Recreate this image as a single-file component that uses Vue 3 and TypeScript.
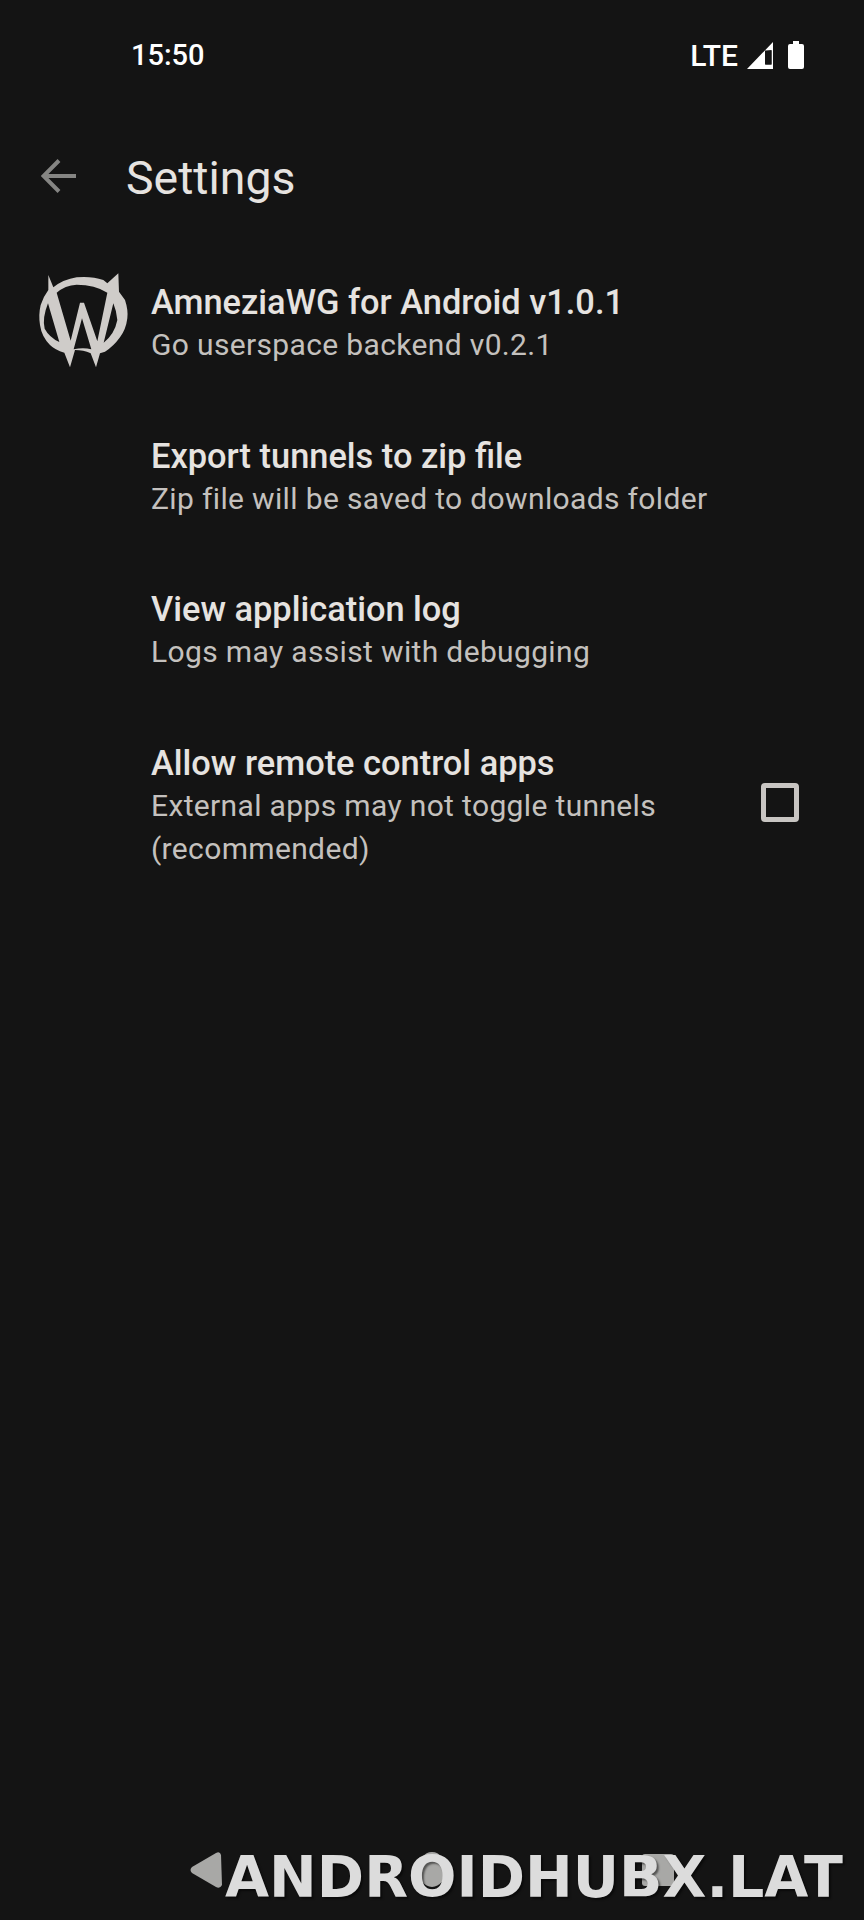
<template>
  <div class="screen">
    <header class="status-bar">
      <span class="clock">15:50</span>
      <div class="status-icons">
        <span class="lte">LTE</span>
        <svg class="signal" width="26" height="27" viewBox="0 0 26 27">
          <path fill-rule="evenodd" fill="#fff" d="M26 0V27H0ZM18 8.500 18 22.500 24.500 22.500 24.500 8.500 Z" />
          <path fill="#141414" d="M18.500 9 24.500 8V22.500H18.500Z" />
        </svg>
        <svg class="battery" width="16" height="28" viewBox="0 0 16 28">
          <path fill="#fff" d="M5 0H11V3H14Q16 3 16 5V26Q16 28 14 28H2Q0 28 0 26V5Q0 3 2 3H5Z" />
        </svg>
      </div>
    </header>

    <div class="toolbar">
      <svg class="back" width="36" height="34" viewBox="0 0 36 34">
        <path d="M35 17H3M18 1.500 2.500 17 18 32.500" fill="none" stroke="#858583" stroke-width="4" />
      </svg>
      <h1 class="page-title">Settings</h1>
    </div>

    <ul class="prefs">
      <li v-for="pref in prefs" :key="pref.title" class="pref">
        <div class="pref-icon">
          <svg v-if="pref.logo" width="120" height="130" viewBox="0 0 360 390">
            <path
              fill="#cfccc9"
              fill-rule="evenodd"
              d="M85 75 100 112Q130 88 170 82 215 78 250 90L262 100 295 70 297 125 315 150Q325 180 322 205 318 238 300 262 280 290 255 305L240 310 228 352 212 310Q190 300 165 300L150 352 133 308Q105 300 90 285 65 260 60 225 55 195 62 165 70 140 85 120Z
              M84 160Q66 205 74 236 88 262 118 276Z
              M110 128 152 272 180 158H192L232 274 262 128Q225 104 170 104 135 106 110 128Z
              M186 205 161 298Q190 291 214 298Z
              M280 160 251 278Q284 252 292 210 290 184 280 160Z"
            />
          </svg>
        </div>
        <div class="pref-text">
          <div class="pref-title">{{ pref.title }}</div>
          <div class="pref-summary">{{ pref.summary }}</div>
        </div>
        <span v-if="pref.checkbox" class="checkbox"></span>
      </li>
    </ul>

    <nav class="nav-bar">
      <svg width="32" height="36" viewBox="0 0 32 36">
        <path fill="#a8a8a6" d="M31 3 Q30 -1 26 1L2 15Q-1 18 2 21L26 35Q30 37 32 33Z" />
      </svg>
      <svg width="32" height="39" viewBox="0 0 32 39">
        <ellipse cx="16" cy="19.500" rx="14" ry="17.500" fill="#a8a8a6" />
      </svg>
      <svg width="32" height="32" viewBox="0 0 32 32">
        <rect width="32" height="32" rx="3" fill="#a8a8a6" />
      </svg>
    </nav>

    <div class="watermark">ANDROIDHUBX.LAT</div>
  </div>
</template>

<script setup lang="ts">
interface Pref {
  title: string
  summary: string
  logo?: boolean
  checkbox?: boolean
}

const prefs: Pref[] = [
  { title: 'AmneziaWG for Android v1.0.1', summary: 'Go userspace backend v0.2.1', logo: true },
  { title: 'Export tunnels to zip file', summary: 'Zip file will be saved to downloads folder' },
  { title: 'View application log', summary: 'Logs may assist with debugging' },
  { title: 'Allow remote control apps', summary: 'External apps may not toggle tunnels (recommended)', checkbox: true },
]
</script>

<style>
html,
body {
  background: #141414;
}
</style>

<style scoped>
.screen {
  position: relative;
  display: flex;
  flex-direction: column;
  height: 1920px;
  overflow: hidden;
  background: #141414;
  font-family: Roboto, "Liberation Sans", sans-serif;
}

.status-bar {
  display: flex;
  align-items: center;
  justify-content: space-between;
  height: 110px;
  padding: 0 60px 0 131px;
  color: #fff;
  font-weight: 500;
}

.clock {
  font-size: 29px;
}

.lte {
  font-size: 30px;
}

.status-icons {
  display: flex;
  align-items: center;
  gap: 9px;
}

.battery {
  margin-left: 6px;
}

.toolbar {
  display: flex;
  align-items: center;
  height: 136px;
  padding-left: 41px;
}

.back {
  margin-bottom: 4px;
}

.page-title {
  margin: 0 0 0 49px;
  font-size: 46.400px;
  font-weight: 400;
  color: #e6e3e0;
}

.prefs {
  margin: 0;
  padding: 0;
  list-style: none;
}

.pref {
  display: flex;
  align-items: center;
  padding: 34.300px 65px 34.300px 0;
}

.pref-icon {
  flex: none;
  display: flex;
  width: 151px;
  padding-left: 20px;
  box-sizing: border-box;
}

.pref-icon svg {
  margin: -30px 0 -14px;
}

.pref-text {
  flex: 1;
  min-width: 0;
  padding-right: 40px;
}

.pref-title {
  font-size: 34.400px;
  line-height: 42px;
  font-weight: 500;
  color: #e6e3e0;
}

.pref-summary {
  font-size: 30px;
  line-height: 43px;
  letter-spacing: 0.35px;
  color: #c4c1be;
}

.checkbox {
  flex: none;
  box-sizing: border-box;
  width: 38px;
  height: 39px;
  margin-bottom: 8px;
  border: 5px solid #c8c5c2;
  border-radius: 4px;
}

.nav-bar {
  display: flex;
  align-items: center;
  gap: 194px;
  margin-top: auto;
  padding: 0 0 31px 190px;
}

.watermark {
  position: absolute;
  left: 225px;
  top: 1843px;
  font-family: "DejaVu Sans", sans-serif;
  font-size: 57px;
  font-weight: 700;
  line-height: 68px;
  white-space: nowrap;
  color: #dcdcdc;
  text-shadow: 2px 2px 2px rgba(0, 0, 0, 0.5);
}
</style>
